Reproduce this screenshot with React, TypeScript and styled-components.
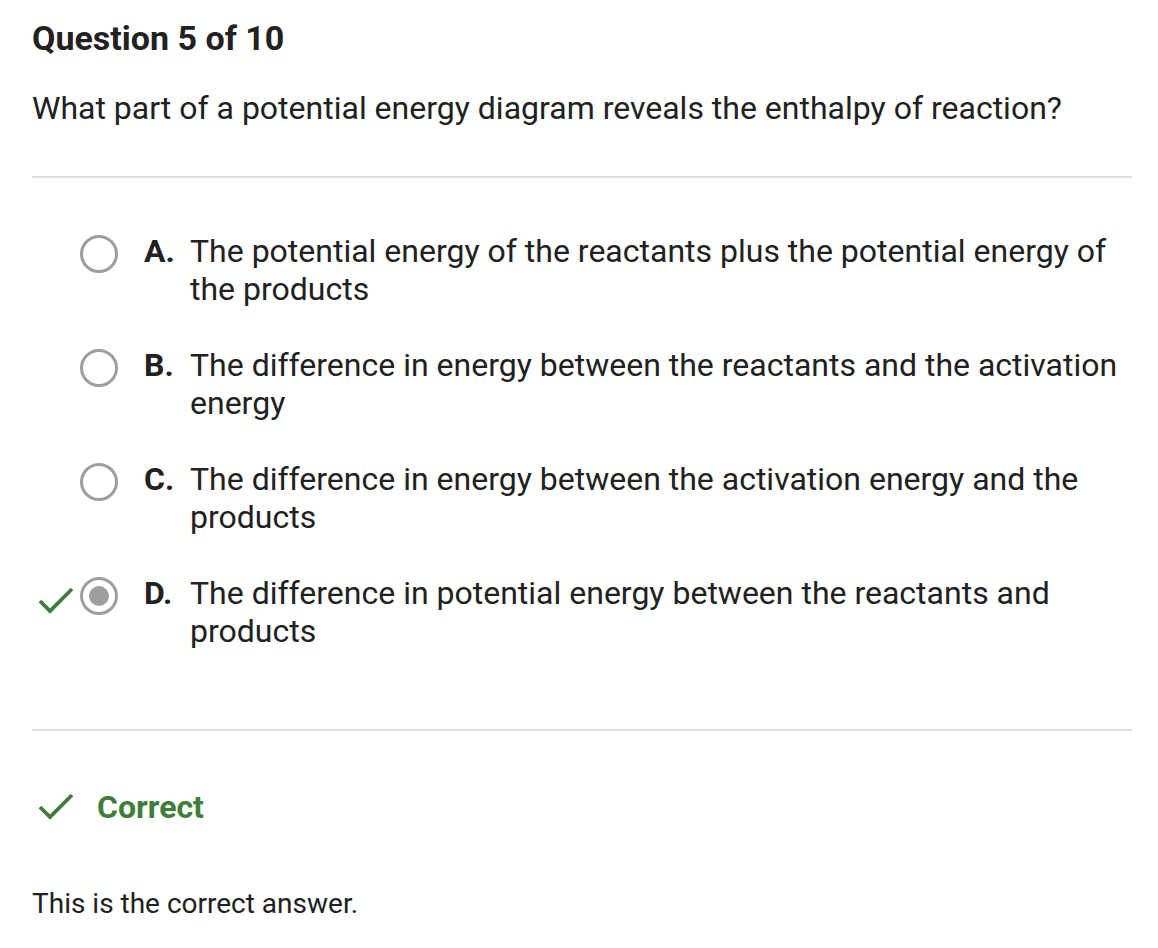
import React from "react";
import styled, { createGlobalStyle } from "styled-components";

const Global = createGlobalStyle`
  html, body { margin: 0; padding: 0; background: #ffffff; }
  body { font-family: Roboto, "Liberation Sans", Arial, sans-serif; color: #212121; }
`;

const Page = styled.div`
  width: 1158px;
  box-sizing: border-box;
  padding: 19px 26px 0 32px;
  display: flex;
  flex-direction: column;
`;

const Title = styled.h1`
  margin: 0;
  font-size: 34px;
  line-height: 38px;
  font-weight: 700;
  color: #212121;
`;

const Prompt = styled.p`
  margin: 32px 0 0 0;
  font-size: 32px;
  line-height: 38px;
  font-weight: 400;
`;

const Divider = styled.hr<{ $top: number }>`
  margin: ${(p) => p.$top}px 0 0 0;
  border: none;
  height: 2px;
  background: #e0e0e0;
`;

const Options = styled.div`
  display: flex;
  flex-direction: column;
  gap: 38px;
  margin-top: 54px;
`;

const OptionRow = styled.div`
  display: grid;
  grid-template-columns: 48px 38px 26px 46px 1fr;
  align-items: start;
`;

const CheckSlot = styled.div`
  grid-column: 1;
  padding: 13px 0 0 6px;
  height: 38px;
  box-sizing: border-box;
`;

const Radio = styled.span<{ $checked?: boolean }>`
  grid-column: 2;
  margin-top: 3px;
  width: 38px;
  height: 38px;
  box-sizing: border-box;
  border-radius: 50%;
  border: 3px solid #9e9e9e;
  display: flex;
  align-items: center;
  justify-content: center;
  &::after {
    content: "";
    display: ${(p) => (p.$checked ? "block" : "none")};
    width: 20px;
    height: 20px;
    border-radius: 50%;
    background: #9e9e9e;
  }
`;

const Letter = styled.span`
  grid-column: 4;
  font-size: 32px;
  line-height: 38px;
  font-weight: 700;
  color: #212121;
`;

const OptionText = styled.span`
  grid-column: 5;
  font-size: 32px;
  line-height: 38px;
  color: #212121;
`;

const Result = styled.div`
  display: flex;
  align-items: center;
  margin-top: 57px;
  height: 38px;
`;

const ResultIcon = styled.span`
  width: 59px;
  padding-left: 6px;
  display: flex;
`;

const ResultLabel = styled.span`
  font-size: 32px;
  line-height: 38px;
  font-weight: 700;
  color: #3f7d3a;
`;

const Explanation = styled.p`
  margin: 59px 0 0 0;
  font-size: 28px;
  line-height: 38px;
`;

const Check = () => (
  <svg width="36" height="28" viewBox="0 0 36 28" fill="none">
    <polyline
      points="2,14 12,24 34,2"
      stroke="#3f7d3a"
      strokeWidth="3.8"
      strokeLinecap="butt"
      strokeLinejoin="miter"
    />
  </svg>
);

const options = [
  { letter: "A.", text: "The potential energy of the reactants plus the potential energy of the products" },
  { letter: "B.", text: "The difference in energy between the reactants and the activation energy" },
  { letter: "C.", text: "The difference in energy between the activation energy and the products" },
  { letter: "D.", text: "The difference in potential energy between the reactants and products", correct: true },
];

export default function App() {
  return (
    <>
      <Global />
      <Page>
        <Title>Question 5 of 10</Title>
        <Prompt>What part of a potential energy diagram reveals the enthalpy of reaction?</Prompt>
        <Divider $top={49} />
        <Options>
          {options.map((o) => (
            <OptionRow key={o.letter}>
              <CheckSlot>{o.correct ? <Check /> : null}</CheckSlot>
              <Radio $checked={o.correct} />
              <Letter>{o.letter}</Letter>
              <OptionText>{o.text}</OptionText>
            </OptionRow>
          ))}
        </Options>
        <Divider $top={79} />
        <Result>
          <ResultIcon>
            <Check />
          </ResultIcon>
          <ResultLabel>Correct</ResultLabel>
        </Result>
        <Explanation>This is the correct answer.</Explanation>
      </Page>
    </>
  );
}
